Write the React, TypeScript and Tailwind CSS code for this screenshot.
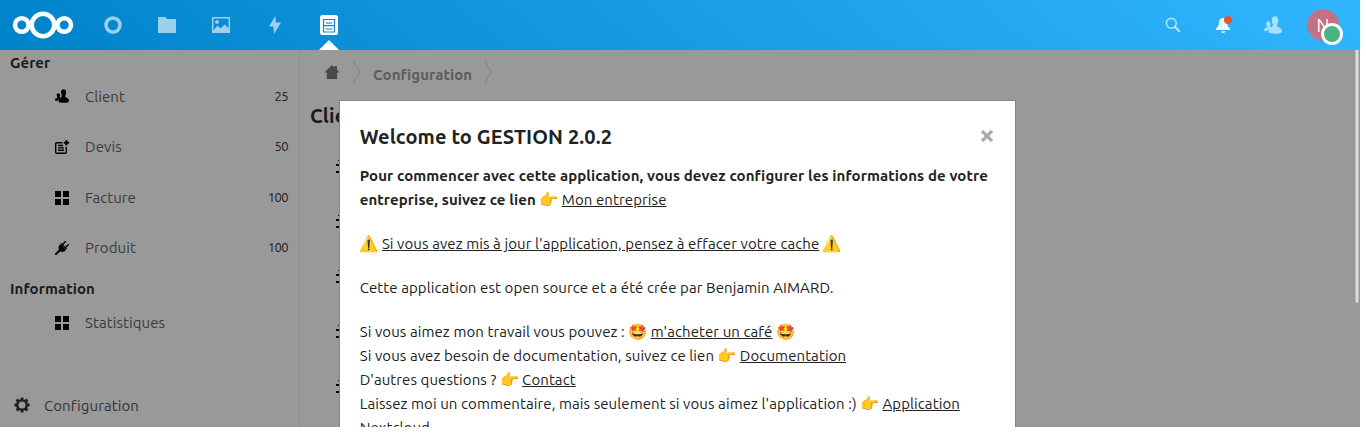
import type { ReactNode } from "react";

const ICON_CLIENT =
  "M10 1.2c-1.7 0-2.8 1.3-2.8 2.9 0 1.4.3 2.5.9 3.4.2.6.1 1.2-.3 1.6-1.400.6-3.5 1.300-3.600 2.500v1.800c0 1 2.800 1.600 6 1.600s5.800-.6 5.800-1.600v-.8c0-1.900-2.200-2.500-3.800-3.400-.4-.4-.4-1.100-.2-1.700.6-.9.9-2 .9-3.400 0-1.600-1.200-2.900-2.900-2.900zM4 5.200c-1 0-1.700.8-1.700 1.800 0 .8.300 1.500.6 2 .1.500 0 .9-.3 1.100C1.600 10.500.5 10.800.5 11.500v.8c0 .4 1 .7 2.600.8.300-1.600 1.400-2.600 3.200-3.300-.5-.3-.7-.5-.6-.9.300-.5.500-1.100.5-1.900C5.800 6 5 5.200 4 5.200z";

function ClientIcon({ className }: { className: string }) {
  return (
    <svg viewBox="0.4 1 15.700 14.200" preserveAspectRatio="none" className={className} fill="currentColor">
      <path d={ICON_CLIENT} />
    </svg>
  );
}

function QuoteIcon() {
  return (
    <svg viewBox="0 0 14 14" className="size-3.5" fill="none" stroke="currentColor" strokeWidth="1.4">
      <path d="M7.500 2.700H1.700a1 1 0 0 0-1 1v8.600a1 1 0 0 0 1 1h8.600a1 1 0 0 0 1-1V7M3 5.500h5M3 7.900h6M3 10.300h6" />
      <path d="M8.800 2.800h5.200M11.400.2v5.200" strokeWidth="2" />
    </svg>
  );
}

function GridIcon() {
  return (
    <svg viewBox="0 0 14 14" className="size-3.5" fill="currentColor" shapeRendering="crispEdges">
      <path d="M0 0h6v6H0zM8 0h6v6H8zM0 8h6v6H0zM8 8h6v6H8z" />
    </svg>
  );
}

function PlugIcon() {
  return (
    <svg viewBox="0 0 14 14" className="size-3.5" stroke="currentColor" strokeLinecap="round">
      <path d="M4.500 4.300L6 3.500l5 5-.9 1.200c-1.300 1.300-3.700 1.400-5.200.4C3.500 8.700 3.200 6 4.500 4.300zM5.500 3.500L10.500 8.500l1.200-1L6.500 2.300z" fill="currentColor" strokeWidth=".3" />
      <path d="M4.800 9.200L1 13" strokeWidth="2" />
      <path d="M7.500 3.500L10.300.7M10.500 6.500l2.800-2.800" strokeWidth="1.500" />
    </svg>
  );
}

function GearIcon() {
  return (
    <svg viewBox="0 0 16 16" className="size-4" fill="none" stroke="currentColor">
      <circle cx="8" cy="8" r="4.800" strokeWidth="2.600" />
      <path d="M8 .4v2.200M8 13.400v2.200M.4 8h2.200M13.400 8h2.200M2.600 2.600l1.600 1.600M11.800 11.800l1.600 1.600M2.600 13.400l1.600-1.600M11.800 4.200l1.600-1.600" strokeWidth="2.800" />
    </svg>
  );
}

function NavRow({ icon, label, count }: { icon: ReactNode; label: ReactNode; count?: string }) {
  return (
    <div className="flex h-[50.3px] items-start pl-[55px] pr-[11px] leading-6">
      <span className="mt-[5px] w-[30px] text-black">{icon}</span>
      <span className="flex-1 text-[#3b3b3b]">{label}</span>
      <span className="-mt-px text-[13px] tracking-[-0.6px] text-[#1a1a1a]">{count}</span>
    </div>
  );
}

function Header() {
  return (
    <header className="flex h-[50px] shrink-0 items-center bg-[linear-gradient(40deg,#0082c9_0%,#30b6ff_100%)] tracking-normal text-white">
      <svg viewBox="0 0 62 28" className="ml-3 h-7 w-[62px]" fill="none" stroke="white">
        <circle cx="31" cy="14" r="11.300" strokeWidth="4.600" />
        <circle cx="9.800" cy="14" r="6.800" strokeWidth="4.600" />
        <circle cx="52.200" cy="14" r="6.800" strokeWidth="4.600" />
      </svg>
      <nav className="ml-[30px] flex h-full items-center gap-9 text-white/60">
        <svg viewBox="0 0 18 18" className="size-[18px]" fill="none" stroke="currentColor" strokeWidth="3.600">
          <circle cx="9" cy="9" r="7" />
        </svg>
        <svg viewBox="0 0 18 18" className="size-[18px]" fill="currentColor">
          <path d="M.5 1h6.700l2 2h8.300q.5 0 .5.500v13q0 .5-.5.500H.5q-.5 0-.5-.5v-15Q0 1 .5 1z" />
        </svg>
        <svg viewBox="0 0 18 18" className="size-[18px]" fill="currentColor">
          <path fillRule="evenodd" d="M.5 1h17q.5 0 .5.500v15q0 .5-.5.500H.5q-.5 0-.5-.5v-15Q0 1 .5 1zM1.500 2.500v12l4-5 3.200 3 4-4.200 3.800 4.200v-10zM5 4a2 2 0 1 1 0 4 2 2 0 0 1 0-4z" />
        </svg>
        <svg viewBox="0 0 18 18" className="size-[18px]" fill="currentColor">
          <path d="M9.300 0L3 10.500h4.500L8 18l7-11.500H9.800z" />
        </svg>
        <div className="relative flex h-full items-center text-white">
          <svg viewBox="0 0 18 20" className="h-5 w-[18px]">
            <rect width="18" height="20" rx="2.500" fill="white" />
            <path d="M3.500 4.500h11v12.500h-11zM3.500 10.700h11" fill="none" stroke="#0b89d1" strokeWidth="1.200" />
            <path d="M6.300 7.200v.9h5.400v-.9M6.300 13.200v.9h5.400v-.9" fill="none" stroke="#0b89d1" strokeWidth="1" />
          </svg>
          <svg viewBox="0 0 20 10" className="absolute -left-px bottom-0 h-2.5 w-5" fill="white">
            <path d="M0 10L10 0l10 10z" />
          </svg>
        </div>
      </nav>
      <div className="ml-auto flex items-center pr-[21px]">
        <svg viewBox="0 0 16 16" className="size-4 text-white/65" fill="none" stroke="currentColor">
          <circle cx="6.300" cy="6.300" r="4.900" strokeWidth="1.600" />
          <path d="M9.800 9.800l5 5" strokeWidth="2.200" />
        </svg>
        <svg viewBox="0 0 18 18" className="ml-[34px] size-[18px]">
          <path d="M8 2C5 2 4 4.500 3.800 7.500 3.700 10 2.500 11.300 1 12.500V14h14v-1.500c-1.500-1.200-2.500-2.500-2.700-5C12.100 4.500 11 2 8 2zM6 15.200c.3 1.200 1 1.800 2.100 1.800s1.900-.6 2.200-1.800z" fill="white" fillOpacity=".9" />
          <circle cx="13" cy="4" r="4" fill="#e2562d" />
        </svg>
        <ClientIcon className="ml-[31px] size-[18px] text-white/60" />
        <div className="relative ml-[25px] flex size-8 items-center justify-center rounded-full bg-[#c37285] text-[18px]">
          N
          <span className="absolute -right-1 -bottom-1 size-[22px] rounded-full border-[3px] border-white bg-[#49b382]" />
        </div>
      </div>
    </header>
  );
}

function Crumb() {
  return (
    <svg viewBox="0 0 8 24" className="h-6 w-2 text-[#858585]" fill="none" stroke="currentColor">
      <path d="M.5.5l6.500 11.500L.5 23.500" />
    </svg>
  );
}

function Line({ children }: { children: ReactNode }) {
  return <div className="h-6 whitespace-pre">{children}</div>;
}

function Emoji({ children }: { children: string }) {
  return (
    <span className="inline-block w-[18.7px] font-['Noto_Color_Emoji'] text-[15.5px] leading-none tracking-normal">
      {children}
    </span>
  );
}

function Link({ children }: { children: string }) {
  return <a className="underline">{children}</a>;
}

function Welcome() {
  return (
    <section className="absolute left-[339px] top-[50px] h-[327px] w-[677px] overflow-hidden border border-b-0 border-[#858585] bg-white pr-5 pl-[19.7px] text-[#222]">
      <div className="flex h-[63px] items-start justify-between pt-[22px]">
        <h2 className="text-[20px] leading-7 font-bold tracking-[0.11px] whitespace-nowrap">Welcome to GESTION 2.0.2</h2>
        <svg viewBox="0 0 12 12" className="mt-[7px] mr-[2.500px] size-3" fill="none" stroke="#aaa" strokeWidth="3.200">
          <path d="M1 1l10 10M11 1L1 11" />
        </svg>
      </div>
      <div className="flex flex-col gap-5 text-[15px] leading-6 tracking-[0.09px]">
        <div className="font-bold tracking-[0.1px]">
          <Line>Pour commencer avec cette application, vous devez configurer les informations de votre</Line>
          <Line>entreprise, suivez ce lien <Emoji>👉</Emoji> <span className="font-normal"><Link>Mon entreprise</Link></span></Line>
        </div>
        <Line><Emoji>⚠️</Emoji> <Link>Si vous avez mis à jour l'application, pensez à effacer votre cache</Link> <Emoji>⚠️</Emoji></Line>
        <Line>Cette application est open source et a été crée par Benjamin AIMARD.</Line>
        <div>
          <Line>Si vous aimez mon travail vous pouvez : <Emoji>🤩</Emoji> <Link>m'acheter un café</Link> <Emoji>🤩</Emoji></Line>
          <Line>Si vous avez besoin de documentation, suivez ce lien <Emoji>👉</Emoji> <Link>Documentation</Link></Line>
          <Line>D'autres questions ? <Emoji>👉</Emoji> <Link>Contact</Link></Line>
          <Line>Laissez moi un commentaire, mais seulement si vous aimez l'application :) <Emoji>👉</Emoji> <Link>Application</Link></Line>
          <Line><Link>Nextcloud</Link></Line>
        </div>
      </div>
    </section>
  );
}

export default function App() {
  return (
    <div className="h-[433px] w-[1366px] overflow-hidden bg-white font-[Ubuntu,'Noto_Sans',sans-serif] text-[15px] tracking-[0.08px]">
      <div className="flex h-[427px] w-[1360px] flex-col overflow-hidden">
        <Header />
        <div className="relative flex flex-1 bg-[#999]">
          <aside className="flex w-[300px] flex-col border-r border-[#8e8e8e]">
            <h3 className="mt-px h-[34px] pl-2.5 leading-6 font-bold text-[#1a1a1a]">Gérer</h3>
            <NavRow icon={<ClientIcon className="-mt-px size-3.5" />} label="Client" count="25" />
            <NavRow icon={<QuoteIcon />} label="Devis" count="50" />
            <NavRow icon={<GridIcon />} label="Facture" count="100" />
            <NavRow icon={<PlugIcon />} label="Produit" count="100" />
            <h3 className="-mt-[9px] h-[34px] pl-2.5 leading-6 font-bold text-[#1a1a1a]">Information</h3>
            <NavRow icon={<GridIcon />} label="Statistiques" />
            <div className="mt-auto flex h-[33px] items-start pl-3.5 leading-6">
              <span className="mt-[3px] w-[30px] text-[#1f1f1f]"><GearIcon /></span>
              <span className="text-[#333]">Configuration</span>
            </div>
          </aside>
          <main className="flex-1">
            <div className="flex h-[50px] items-start pt-2.5 pl-6">
              <svg viewBox="0 0 16 16" className="mt-1 size-4 text-[#4a4a4a]" fill="currentColor">
                <path d="M8 1L.3 8.500h2.500v6.500h10.400v-6.500h2.500L13 5.800V2h-2.600v1.300z" />
              </svg>
              <span className="ml-[13px]"><Crumb /></span>
              <span className="ml-3 pt-[3px] leading-6 font-bold text-[#5c5c5c]">Configuration</span>
              <span className="ml-3"><Crumb /></span>
            </div>
            <h2 className="pl-2.5 text-[20px] leading-8 font-bold text-[#1a1a1a]">Client</h2>
            <div className="mt-[27px] flex flex-col gap-[41px] pl-9">
              {[0, 1, 2, 3, 4].map((row) => (
                <svg key={row} viewBox="0 0 14 14" className="size-3.5" shapeRendering="crispEdges" fill="black">
                  <path d="M2 1h10v1H2zM0 5h14v2H0zM0 12h14v2H0z" />
                </svg>
              ))}
            </div>
          </main>
          <div className="absolute top-0 right-px h-[253px] w-1 rounded-b border-x border-[#bbb] bg-[#ddd]" />
          <Welcome />
        </div>
      </div>
    </div>
  );
}
